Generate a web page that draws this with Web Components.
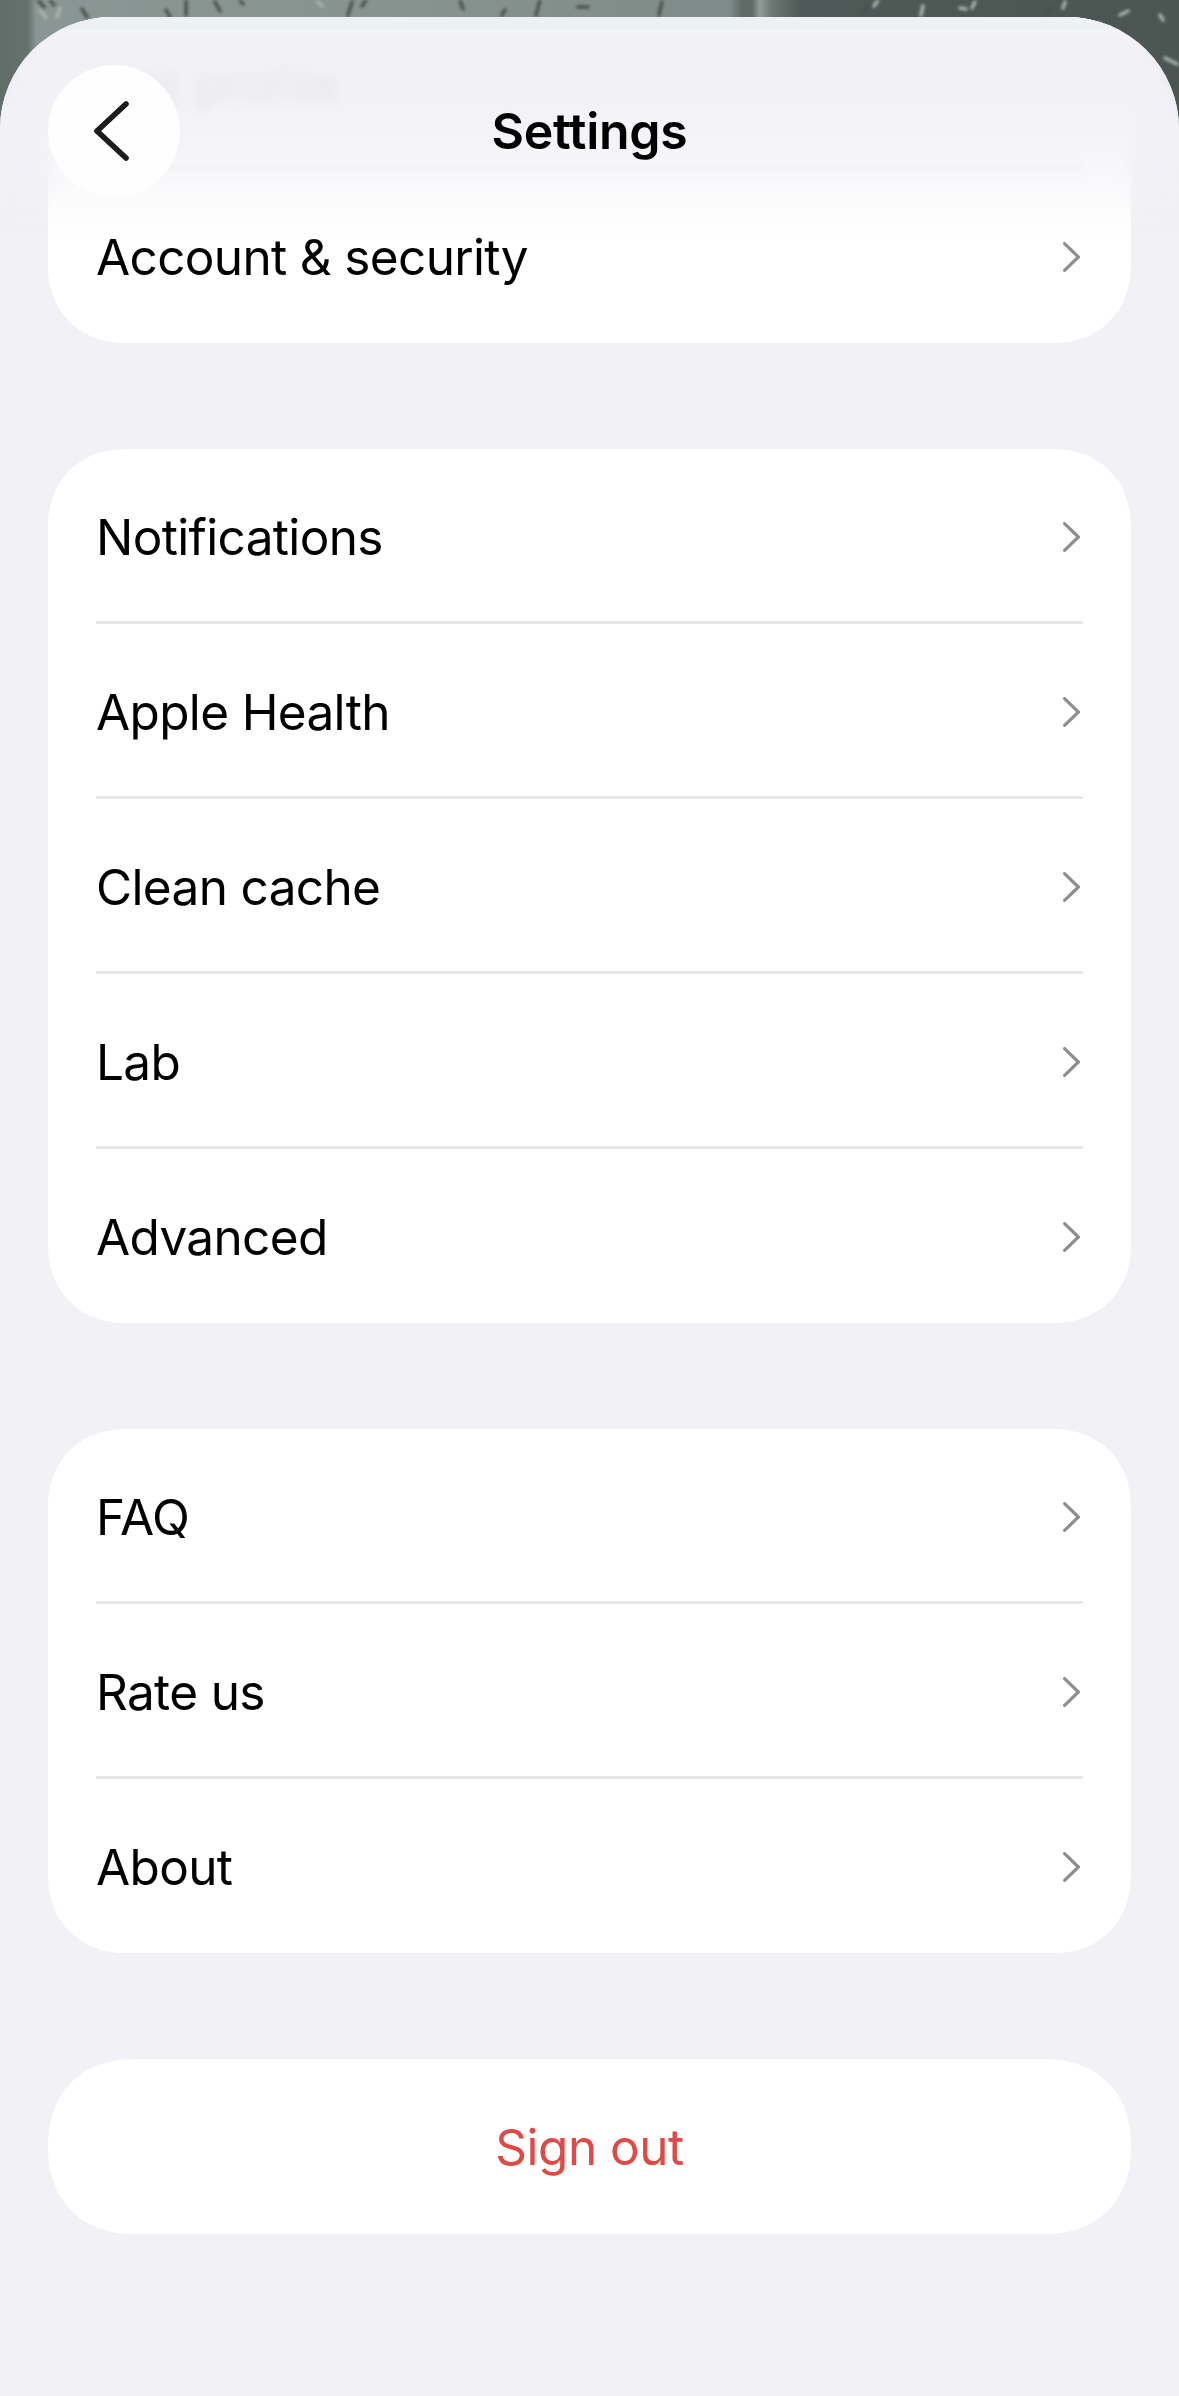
<!DOCTYPE html>
<html><head><meta charset="utf-8"><style>
html,body{margin:0;padding:0;background:#f1f1f6;}
body{width:1179px;height:2396px;overflow:hidden;font-family:Inter,"Liberation Sans",sans-serif;}
</style></head><body>
<template id="tpl-row"><style>
:host{display:flex;align-items:center;justify-content:space-between;height:168px;padding-top:4px;color:#000;font-size:49.5px;letter-spacing:-.65px;}
svg{display:block;width:17px;height:30px;margin-right:3px;}
</style><slot></slot><svg viewBox="0 0 17 30"><path d="M1.6 1.6 L15.4 15 L1.6 28.4" fill="none" stroke="#8e8e90" stroke-width="3.2" stroke-linecap="round" stroke-linejoin="miter"/></svg></template>
<template id="tpl-card"><style>
:host{display:block;background:#fff;border-radius:78px;corner-shape:superellipse(1.1);padding:0 48px 2px;}
::slotted(settings-row:not(:last-child)){border-bottom:3px solid #e8e8ea;}
</style><slot></slot></template>
<template id="tpl-signout"><style>
:host{display:flex;align-items:center;justify-content:center;height:175px;background:#fff;border-radius:87px;corner-shape:superellipse(1.15);color:#e04a46;font-size:49.5px;letter-spacing:-.5px;}
</style><slot></slot></template>
<template id="tpl-header"><style>
:host{position:absolute;left:0;right:0;top:17px;height:225px;display:block;border-radius:112px 112px 0 0;overflow:hidden;}
.blur{position:absolute;inset:0;backdrop-filter:blur(7px);-webkit-mask-image:linear-gradient(#000 60%,transparent 92%);mask-image:linear-gradient(#000 60%,transparent 92%);}
.tint{position:absolute;inset:0;background:linear-gradient(#eef1f3 0,#eef1f3 13px,#f4f5f7 13px,#f4f5f7 14px,#f1f1f6 22px,rgba(241,241,246,.93) 37%,rgba(241,241,246,.7) 59%,rgba(241,241,246,.25) 81%,rgba(241,241,246,0) 100%);}
.bar{position:relative;display:flex;align-items:center;justify-content:center;height:132px;margin-top:48px;}
h1{margin:0;font-size:50px;font-weight:600;color:#000;letter-spacing:-.3px;}
.back{position:absolute;left:48px;top:0;width:132px;height:132px;border-radius:50%;background:#fefefe;display:flex;align-items:center;justify-content:center;}
.back svg{display:block;width:36px;height:64px;margin-right:6px;}
</style><div class="blur"></div><div class="tint"></div><div class="bar"><div class="back"><svg viewBox="0 0 36 64"><path d="M33 5 L4 32 L33 59" fill="none" stroke="#1c1c1e" stroke-width="5.6" stroke-linecap="round" stroke-linejoin="round"/></svg></div><h1><slot></slot></h1></div></template>
<template id="tpl-photo"><style>
:host{position:absolute;left:0;top:0;right:0;height:180px;display:block;overflow:hidden;background:linear-gradient(90deg,#616d69 0,#66726e 28px,#8a9693 36px,#87938f 400px,#7f8b88 730px,#5f6966 742px,#5f6966 752px,#929c99 760px,#6d7774 772px,#4f5957 800px,#4b5552 100%);}
svg{position:absolute;left:0;top:0;width:1179px;height:180px;filter:blur(1.5px);}
</style><svg viewBox="0 0 1179 180" fill="none" stroke-linecap="round"><g stroke="#4a5250" stroke-width="3.5"><path d="M38 0l6 7M50 0l4 5M82 9l5 8M166 10l4 7M186 0l0 15M215 2l5 9M240 0l3 4M352 2l-4 13M366 0l-4 6M460 0l3 9M505 10l-3 5M540 0l-4 15M578 7l10 0M662 2l-3 13M870 5l-8 9M1050 8l-6 8"/></g><g stroke="#a9b3b0" stroke-width="3.5"><path d="M40 10l6 8M60 8l-3 9M318 2l4 4M878 0l-4 6M923 6l-2 9M960 8l6 1M975 2l-3 6M1120 15l8-4M1065 2l-2 6M1160 15l3 5M1165 58l12 6"/></g></svg></template>

<photo-strip></photo-strip>
<settings-page>
<settings-card id="first">
<settings-row>Edit profile</settings-row>
<settings-row>Account &amp; security</settings-row>
</settings-card>
<settings-card>
<settings-row>Notifications</settings-row>
<settings-row>Apple Health</settings-row>
<settings-row>Clean cache</settings-row>
<settings-row>Lab</settings-row>
<settings-row>Advanced</settings-row>
</settings-card>
<settings-card>
<settings-row>FAQ</settings-row>
<settings-row>Rate us</settings-row>
<settings-row>About</settings-row>
</settings-card>
<sign-out>Sign out</sign-out>
</settings-page>
<settings-header>Settings</settings-header>
<script>
function def(name,tpl,css){customElements.define(name,class extends HTMLElement{constructor(){super();const r=this.attachShadow({mode:'open'});if(tpl)r.appendChild(document.getElementById(tpl).content.cloneNode(true));else r.innerHTML=css;}});}
def('settings-row','tpl-row');def('settings-card','tpl-card');def('sign-out','tpl-signout');def('settings-header','tpl-header');def('photo-strip','tpl-photo');
def('settings-page',null,'<style>:host{position:absolute;left:0;right:0;top:17px;bottom:0;display:block;padding:0 48px;background:#f1f1f6;border-radius:112px 112px 0 0;overflow:hidden;}.scroll{display:flex;flex-direction:column;gap:106px;margin-top:-23px;}</style><div class="scroll"><slot></slot></div>');
</script>
</body></html>
